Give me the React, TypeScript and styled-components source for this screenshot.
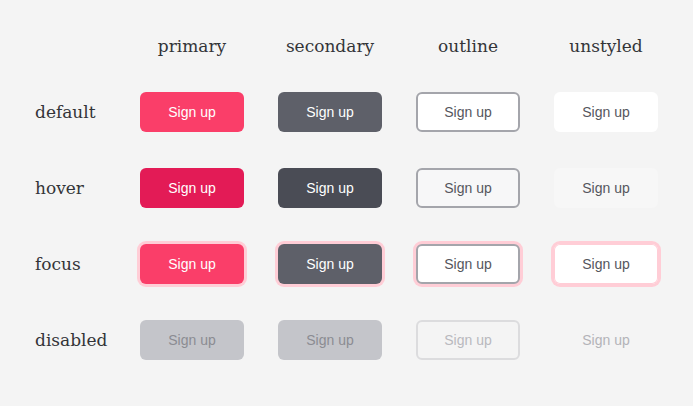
import React from "react";
import styled, { createGlobalStyle, css } from "styled-components";

type Variant = "primary" | "secondary" | "outline" | "unstyled";
type State = "default" | "hover" | "focus" | "disabled";

const GlobalStyle = createGlobalStyle`
  html, body {
    margin: 0;
    background: #f4f4f4;
  }
`;

const Grid = styled.div`
  display: grid;
  grid-template-columns: 71px repeat(4, 104px);
  grid-template-rows: repeat(5, 40px);
  column-gap: 34px;
  row-gap: 36px;
  padding: 16px 0 0 35px;
  font-family: "DejaVu Serif", "Liberation Serif", serif;
  color: #333438;
`;

const ColumnHead = styled.div`
  align-self: end;
  justify-self: center;
  font-size: 17px;
  line-height: 20px;
  white-space: nowrap;
`;

const RowLabel = styled.div`
  align-self: center;
  font-size: 17px;
  line-height: 20px;
  white-space: nowrap;
`;

const palette: Record<Variant, Record<State, ReturnType<typeof css>>> = {
  primary: {
    default: css`background: #fa3e69; color: #fff;`,
    hover: css`background: #e31b56; color: #fff;`,
    focus: css`background: #fa3e69; color: #fff; box-shadow: 0 0 0 3px #ffcdd6;`,
    disabled: css`background: #c4c5ca; color: #8b8c92;`,
  },
  secondary: {
    default: css`background: #5e6069; color: #fff;`,
    hover: css`background: #4a4c55; color: #fff;`,
    focus: css`background: #5e6069; color: #fff; box-shadow: 0 0 0 3px #ffcdd6;`,
    disabled: css`background: #c4c5ca; color: #8b8c92;`,
  },
  outline: {
    default: css`background: #fff; color: #55565d; border: 2px solid #a4a5ab;`,
    hover: css`background: #f7f7f8; color: #55565d; border: 2px solid #a4a5ab;`,
    focus: css`background: #fff; color: #55565d; border: 2px solid #a4a5ab; box-shadow: 0 0 0 3px #ffcdd6;`,
    disabled: css`background: transparent; color: #b9b9be; border: 2px solid #dcdcde;`,
  },
  unstyled: {
    default: css`background: #fff; color: #55565d;`,
    hover: css`background: #f7f7f7; color: #55565d;`,
    focus: css`background: #fff; color: #55565d; box-shadow: inset 0 0 0 1px #ffcdd6, 0 0 0 3px #ffcdd6;`,
    disabled: css`background: transparent; color: #b3b3b8;`,
  },
};

const Button = styled.button<{ $variant: Variant; $state: State }>`
  box-sizing: border-box;
  width: 104px;
  height: 40px;
  border: none;
  border-radius: 6px;
  padding: 0;
  font-family: "Liberation Sans", Arial, sans-serif;
  font-size: 14px;
  cursor: pointer;
  outline: none;
  ${({ $variant, $state }) => palette[$variant][$state]}
`;

const variants: Variant[] = ["primary", "secondary", "outline", "unstyled"];
const states: State[] = ["default", "hover", "focus", "disabled"];

export default function App() {
  return (
    <>
      <GlobalStyle />
      <Grid>
        <div />
        {variants.map((v) => (
          <ColumnHead key={v}>{v}</ColumnHead>
        ))}
        {states.map((s) => (
          <React.Fragment key={s}>
            <RowLabel>{s}</RowLabel>
            {variants.map((v) => (
              <Button key={v} $variant={v} $state={s} disabled={s === "disabled"}>
                Sign up
              </Button>
            ))}
          </React.Fragment>
        ))}
      </Grid>
    </>
  );
}
